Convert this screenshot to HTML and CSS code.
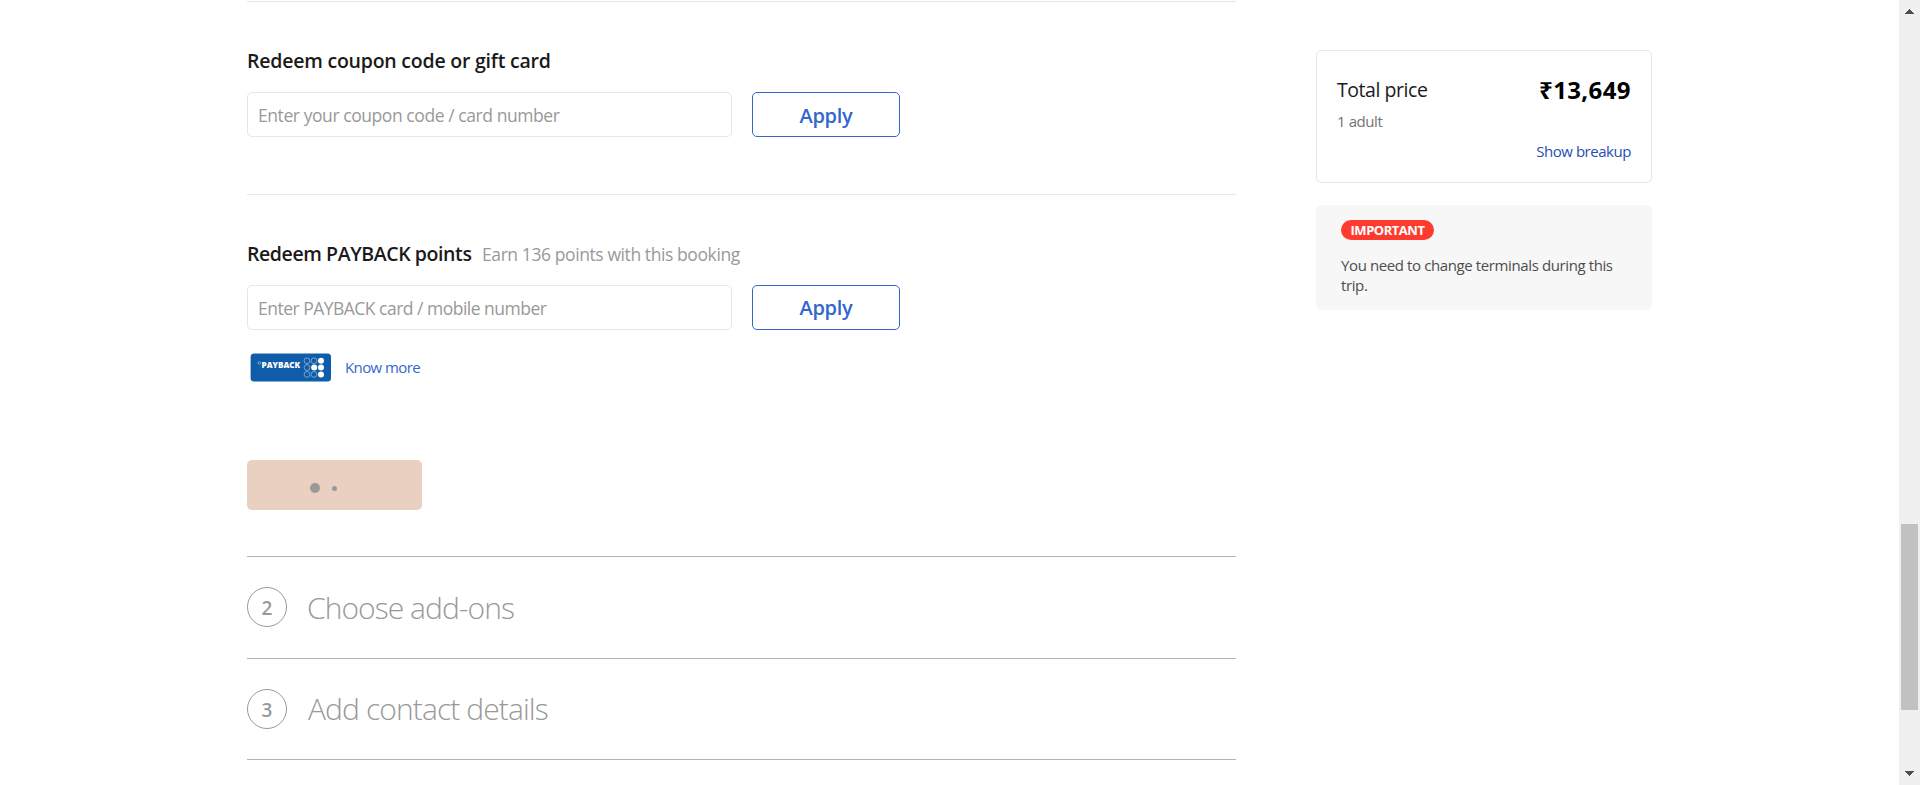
FILE: index.html
```
<!DOCTYPE html>
<html lang="en">
<head>
<meta charset="utf-8">
<title>Review booking</title>
<link rel="stylesheet" href="styles.css">
</head>
<body>
<div class="page">
  <main class="content">
    <section class="redeem">
      <div class="heading-row"><h2 class="heading">Redeem coupon code or gift card</h2></div>
      <div class="form-row">
        <div class="field field-coupon">Enter your coupon code / card number</div>
        <button class="apply">Apply</button>
      </div>
    </section>
    <section class="redeem redeem-points">
      <div class="heading-row">
        <h2 class="heading heading-points">Redeem PAYBACK points</h2>
        <span class="earn">Earn 136 points with this booking</span>
      </div>
      <div class="form-row">
        <div class="field field-points">Enter PAYBACK card / mobile number</div>
        <button class="apply apply-points">Apply</button>
      </div>
      <div class="payback-row">
        <svg class="logo" viewBox="0 0 82 29" width="82" height="29">
          <rect x=".6" y=".6" width="80.4" height="27.8" rx="3.5" fill="#0f5ca8"/>
          <circle cx="9.3" cy="10" r="1.3" fill="none" stroke="#9fc0e0" stroke-width=".7"/>
          <text class="logo-text" x="11.6" y="14.6" textLength="38.5" lengthAdjust="spacingAndGlyphs">PAYBACK</text>
          <g fill="none" stroke="#8fb4da" stroke-width=".8">
            <circle cx="57" cy="7.8" r="2.9"/><circle cx="64" cy="7.8" r="2.9"/>
            <circle cx="57" cy="14.6" r="2.9"/>
            <circle cx="57" cy="21.4" r="2.9"/><circle cx="64" cy="21.4" r="2.9"/>
          </g>
          <g fill="#fff">
            <circle cx="71" cy="7.8" r="3"/><circle cx="64.2" cy="14.6" r="3"/>
            <circle cx="71" cy="14.6" r="3"/><circle cx="71" cy="21.4" r="3"/>
          </g>
        </svg>
        <a class="know">Know more</a>
      </div>
      <div class="continue">
        <span class="dot dot-large"></span><span class="dot dot-small"></span>
      </div>
    </section>
    <section class="step step-addons">
      <span class="num">2</span><h2 class="title title-addons">Choose add-ons</h2>
    </section>
    <section class="step step-contact">
      <span class="num">3</span><h2 class="title title-contact">Add contact details</h2>
    </section>
    <div class="rule"></div>
  </main>
  <aside class="side">
    <div class="price-card">
      <div class="price-row"><span class="total">Total price</span><span class="price">₹13,649</span></div>
      <div class="adult">1 adult</div>
      <a class="breakup">Show breakup</a>
    </div>
    <div class="notice">
      <span class="badge">IMPORTANT</span>
      <p class="notice-text">You need to change terminals during this trip.</p>
    </div>
  </aside>
  <div class="scrollbar">
    <svg class="arrow" viewBox="0 0 9 5" width="9" height="5" shape-rendering="crispEdges"><path d="M4 0h1v1h1v1h1v1h1v1h1v1H0V4h1V3h1V2h1V1h1z" fill="#505050"/></svg>
    <div class="thumb"></div>
    <svg class="arrow arrow-down" viewBox="0 0 9 5" width="9" height="5" shape-rendering="crispEdges"><path d="M0 0h9v1H8v1H7v1H6v1H5v1H4V4H3V3H2V2H1V1H0z" fill="#505050"/></svg>
  </div>
</div>
</body>
</html>
```
FILE: styles.css
```
* { box-sizing: border-box; }
body { margin: 0; background: #fff; overflow: hidden; font-family: "Open Sans", "Noto Sans", sans-serif; color: #1a1a1a; }
h2, p { margin: 0; font-weight: 400; }

.page { display: flex; height: 785px; }
.content { width: 989px; margin: 1px 80px 0 247px; flex: none; }

.redeem { height: 193px; border-top: 1px solid #e6e6e6; padding-top: 45px; }
.redeem-points { height: 362px; }
.heading-row { display: flex; height: 28px; line-height: 28px; white-space: nowrap; }
.heading { font-size: 19.5px; font-weight: 600; line-height: 28px; letter-spacing: -.22px; }
.heading-points { width: 235px; letter-spacing: -.41px; }
.earn { font-size: 17.5px; letter-spacing: -.41px; color: #999; }

.form-row { display: flex; gap: 20px; margin-top: 17px; }
.field { width: 485px; height: 45px; border: 1px solid #e6e6e6; border-radius: 5px; padding-left: 10px; font-size: 17.5px; line-height: 45px; color: #999; white-space: nowrap; }
.field-coupon { letter-spacing: -.43px; }
.field-points { letter-spacing: -.51px; }
.apply { width: 148px; height: 45px; border: 1px solid #3366cc; border-radius: 5px; background: #fff; padding: 2px 0 0; font: 600 20px "Open Sans", sans-serif; letter-spacing: -.28px; color: #3366cc; }
.apply-points { padding-top: 0; }

.payback-row { display: flex; margin: 23px 0 0 3px; height: 29px; }
.logo { flex: none; }
.logo-text { font: 800 8px "Open Sans", sans-serif; fill: #fff; }
.know { margin-left: 13px; font-size: 15px; line-height: 29px; letter-spacing: -.6px; color: #3366cc; }

.continue { display: flex; align-items: center; width: 175px; height: 50px; margin-top: 78px; padding: 6px 0 0 63px; border-radius: 5px; background: #e9d0c1; }
.dot { border-radius: 50%; background: #999; }
.dot-large { width: 10px; height: 10px; }
.dot-small { width: 5px; height: 5px; margin-left: 12px; }

.step { display: flex; height: 102px; border-top: 1px solid #b3b3b3; padding-top: 30px; }
.step-contact { height: 101px; }
.num { width: 40px; height: 40px; border: 1px solid #999; border-radius: 50%; font-size: 19px; font-weight: 600; line-height: 41px; text-align: center; color: #999; }
.title { margin-left: 20px; font-size: 30px; font-weight: 300; line-height: 40px; color: #999; white-space: nowrap; }
.title-addons { line-height: 42px; letter-spacing: -.95px; }
.title-contact { margin-left: 21px; letter-spacing: -.9px; }
.rule { height: 1px; background: #b3b3b3; }

.side { width: 336px; padding-top: 50px; flex: none; }
.price-card { height: 133px; border: 1px solid #e6e6e6; border-radius: 5px; padding: 24px 20px 0 20px; }
.price-row { display: flex; justify-content: space-between; line-height: 30px; }
.total { font-size: 19.5px; letter-spacing: -.45px; }
.price { font-size: 24px; font-weight: 700; letter-spacing: .4px; color: #000; }
.adult { margin-top: 6px; font-size: 15px; line-height: 20px; letter-spacing: -.42px; color: #737373; }
.breakup { display: block; margin-top: 10px; text-align: right; font-size: 15px; line-height: 20px; letter-spacing: -.46px; color: #2450b2; }

.notice { height: 105px; margin-top: 22px; padding: 15px 25px 0; border-radius: 5px; background: #f7f7f7; }
.badge { display: block; width: 93px; height: 20px; border-radius: 10px; background: #ff3b2f; font-size: 13px; font-weight: 700; line-height: 20px; letter-spacing: -.48px; text-align: center; color: #fff; }
.notice-text { margin-top: 15px; font-size: 15px; line-height: 20px; letter-spacing: -.39px; color: #4d4d4d; }

.scrollbar { width: 21px; margin-left: auto; background: #f0f0f0; display: flex; flex-direction: column; }
.arrow { flex: none; margin: 9px 0 0 6px; }
.thumb { width: 17px; height: 186px; margin: 510px 0 0 2px; background: #c1c1c1; }
.arrow-down { margin-top: 61px; }
```
